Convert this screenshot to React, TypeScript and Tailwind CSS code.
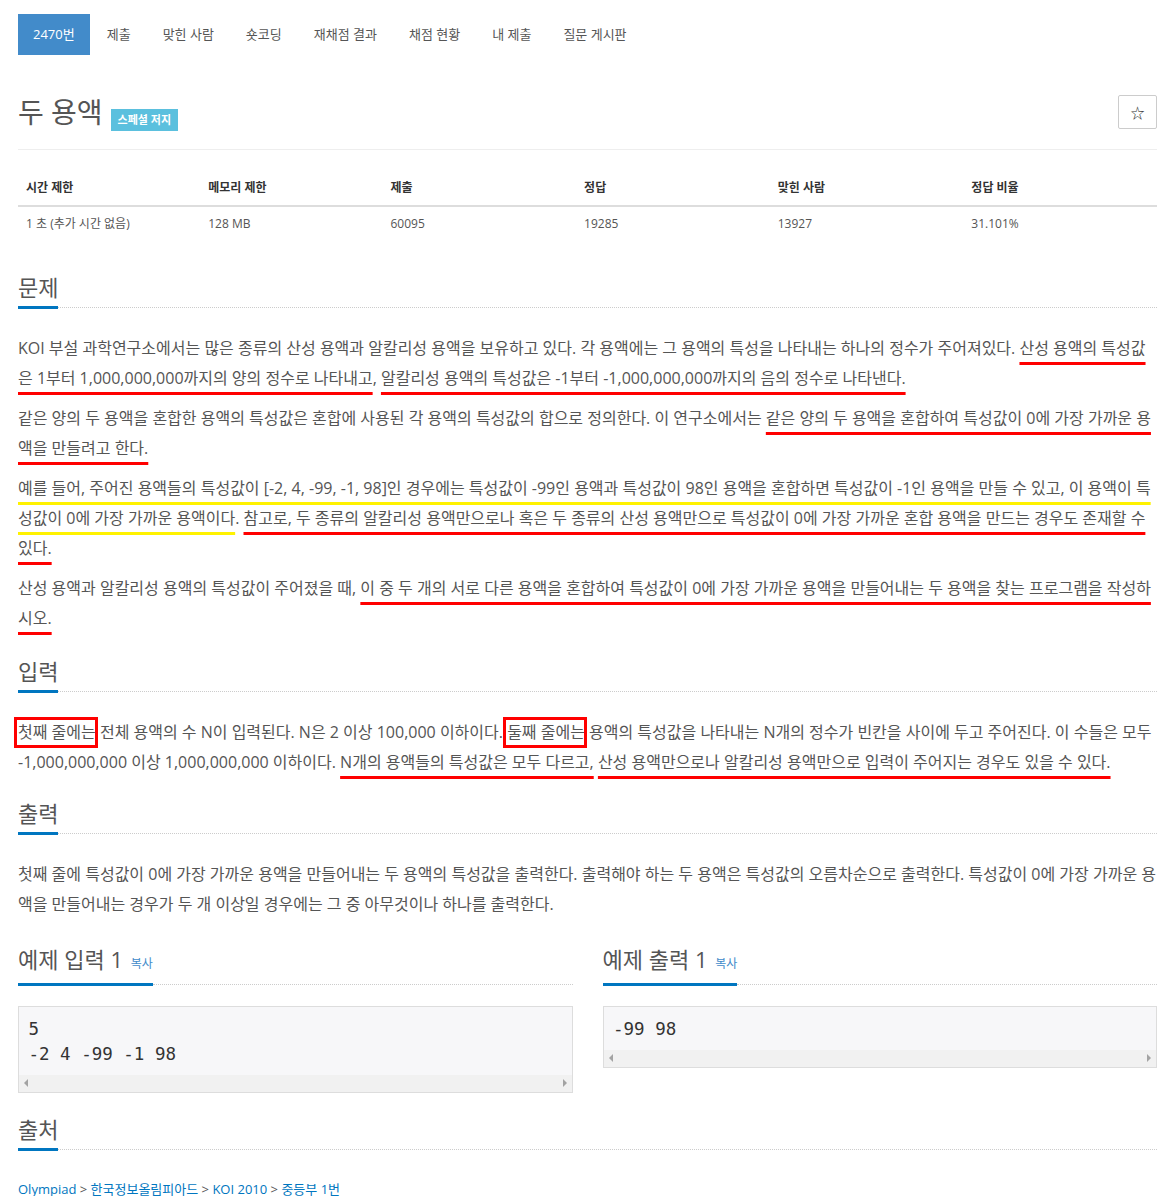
import React from 'react';

type Mark = 'r' | 'y' | 'box';
type Seg = { t: string; k?: Mark };

const tabs = ['제출', '맞힌 사람', '숏코딩', '재채점 결과', '채점 현황', '내 제출', '질문 게시판'];

const stats = [
  { h: '시간 제한', v: '1 초 (추가 시간 없음)', w: 'w-[16%]' },
  { h: '메모리 제한', v: '128 MB', w: 'w-[16%]' },
  { h: '제출', v: '60095', w: 'w-[17%]' },
  { h: '정답', v: '19285', w: 'w-[17%]' },
  { h: '맞힌 사람', v: '13927', w: 'w-[17%]' },
  { h: '정답 비율', v: '31.101%', w: 'w-[17%]' },
];

const problem: Seg[][][] = [
  [
    [
      { t: 'KOI 부설 과학연구소에서는 많은 종류의 산성 용액과 알칼리성 용액을 보유하고 있다. 각 용액에는 그 용액의 특성을 나타내는 하나의 정수가 주어져있다. ' },
      { t: '산성 용액의 특성값', k: 'r' },
    ],
    [
      { t: '은 1부터 1,000,000,000까지의 양의 정수로 나타내고', k: 'r' },
      { t: ', ' },
      { t: '알칼리성 용액의 특성값은 -1부터 -1,000,000,000까지의 음의 정수로 나타낸다.', k: 'r' },
    ],
  ],
  [
    [
      { t: '같은 양의 두 용액을 혼합한 용액의 특성값은 혼합에 사용된 각 용액의 특성값의 합으로 정의한다. 이 연구소에서는 ' },
      { t: '같은 양의 두 용액을 혼합하여 특성값이 0에 가장 가까운 용', k: 'r' },
    ],
    [{ t: '액을 만들려고 한다.', k: 'r' }],
  ],
  [
    [
      { t: '예를 들어, 주어진 용액들의 특성값이 [-2, 4, -99, -1, 98]인 경우에는 특성값이 -99인 용액과 특성값이 98인 용액을 혼합하면 특성값이 -1인 용액을 만들 수 있고, 이 용액이 특', k: 'y' },
    ],
    [
      { t: '성값이 0에 가장 가까운 용액이다', k: 'y' },
      { t: '. ' },
      { t: '참고로, 두 종류의 알칼리성 용액만으로나 혹은 두 종류의 산성 용액만으로 특성값이 0에 가장 가까운 혼합 용액을 만드는 경우도 존재할 수', k: 'r' },
    ],
    [{ t: '있다.', k: 'r' }],
  ],
  [
    [
      { t: '산성 용액과 알칼리성 용액의 특성값이 주어졌을 때, ' },
      { t: '이 중 두 개의 서로 다른 용액을 혼합하여 특성값이 0에 가장 가까운 용액을 만들어내는 두 용액을 찾는 프로그램을 작성하', k: 'r' },
    ],
    [{ t: '시오.', k: 'r' }],
  ],
];

const input: Seg[][][] = [
  [
    [
      { t: '첫째 줄에는', k: 'box' },
      { t: ' 전체 용액의 수 N이 입력된다. N은 2 이상 100,000 이하이다. ' },
      { t: '둘째 줄에는', k: 'box' },
      { t: ' 용액의 특성값을 나타내는 N개의 정수가 빈칸을 사이에 두고 주어진다. 이 수들은 모두' },
    ],
    [
      { t: '-1,000,000,000 이상 1,000,000,000 이하이다. ' },
      { t: 'N개의 용액들의 특성값은 모두 다르고,', k: 'r' },
      { t: ' ' },
      { t: '산성 용액만으로나 알칼리성 용액만으로 입력이 주어지는 경우도 있을 수 있다.', k: 'r' },
    ],
  ],
];

const output: Seg[][][] = [
  [
    [{ t: '첫째 줄에 특성값이 0에 가장 가까운 용액을 만들어내는 두 용액의 특성값을 출력한다. 출력해야 하는 두 용액은 특성값의 오름차순으로 출력한다. 특성값이 0에 가장 가까운 용' }],
    [{ t: '액을 만들어내는 경우가 두 개 이상일 경우에는 그 중 아무것이나 하나를 출력한다.' }],
  ],
];

const Piece = ({ s }: { s: Seg }) => {
  if (s.k === 'r')
    return (
      <span className="underline decoration-[#ff0000] decoration-[3px] underline-offset-[8px] [text-decoration-skip-ink:none]">
        {s.t}
      </span>
    );
  if (s.k === 'y')
    return (
      <span className="underline decoration-[#fff200] decoration-[3px] underline-offset-[8px] [text-decoration-skip-ink:none]">
        {s.t}
      </span>
    );
  if (s.k === 'box')
    return (
      <span className="relative">
        {s.t}
        <span className="absolute -bottom-[5px] -left-[4px] -right-[2px] -top-[4px] border-[3px] border-[#ff0000]" />
      </span>
    );
  return <>{s.t}</>;
};

const Paragraphs = ({ paras }: { paras: Seg[][][] }) => (
  <div className="mt-[24px] flex flex-col gap-[10px] text-[16px] leading-[30px] text-[#555]">
    {paras.map((p, i) => (
      <div key={i}>
        {p.map((line, j) => (
          <div key={j} className="whitespace-pre">
            {line.map((s, k) => (
              <Piece key={k} s={s} />
            ))}
          </div>
        ))}
      </div>
    ))}
  </div>
);

const Heading = ({ children, className = '' }: { children: React.ReactNode; className?: string }) => (
  <div className={`flex items-end ${className}`}>
    <div className="border-b-[3px] border-[#0076c0] pb-[7px] text-[22px] leading-[24px] text-[#555]">{children}</div>
    <div className="mb-[1px] flex-1 border-b border-dotted border-[#ccc]" />
  </div>
);

const Sample = ({ title, lines }: { title: string; lines: string[] }) => (
  <div>
    <Heading>
      {title} <span className="ml-[2px] text-[12px] text-[#428bca]">복사</span>
    </Heading>
    <div className="mt-[20px] border border-[#ddd] bg-[#f7f7f9]">
      <div className="px-[9.5px] pb-[8px] pt-[9.5px] font-['DejaVu_Sans_Mono',monospace] text-[17.5px] leading-[25px] text-[#333]">
        {lines.map((l, i) => (
          <div key={i} className="whitespace-pre">
            {l}
          </div>
        ))}
      </div>
      <div className="flex h-[17px] items-center justify-between bg-[#f1f1f1] px-[5px]">
        <span className="border-y-[4px] border-r-[4px] border-y-transparent border-r-[#a3a3a3]" />
        <span className="border-y-[4px] border-l-[4px] border-y-transparent border-l-[#a3a3a3]" />
      </div>
    </div>
  </div>
);

export default function App() {
  return (
    <div className="min-h-[1196px] bg-white pl-[18px] pr-[14px] pt-[14px] font-['Open_Sans','Noto_Sans_CJK_KR',sans-serif] text-[#555]">
      <nav className="flex gap-[2px] text-[13px]">
        <a className="flex h-[41px] items-center bg-[#428bca] px-[15px] text-white">2470번</a>
        {tabs.map((t) => (
          <a key={t} className="flex h-[41px] items-center px-[15px] text-[#555]">
            {t}
          </a>
        ))}
      </nav>

      <div className="mt-[40px] flex h-[34px] items-center justify-between">
        <div className="flex items-end">
          <h1 className="text-[28px] leading-[30px] text-[#555]">두 용액</h1>
          <span className="mb-[-4px] ml-[8px] bg-[#5bc0de] px-[7px] py-[3px] text-[11px] font-bold leading-[16px] text-white">
            스페셜 저지
          </span>
        </div>
        <button className="flex h-[34px] w-[39px] items-center justify-center rounded-[2px] border border-[#ccc] text-[14px] text-[#333]">
          ☆
        </button>
      </div>

      <div className="mt-[20px] border-t border-[#eee]" />

      <table className="mt-[19px] w-full text-left text-[12px]">
        <thead>
          <tr className="border-b-2 border-[#ddd]">
            {stats.map((s) => (
              <th key={s.h} className={`${s.w} px-[8px] pb-[7px] pt-[9px] font-bold leading-[20px] text-[#333]`}>
                {s.h}
              </th>
            ))}
          </tr>
        </thead>
        <tbody>
          <tr>
            {stats.map((s) => (
              <td key={s.h} className="px-[8px] py-[8px] leading-[17px]">
                {s.v}
              </td>
            ))}
          </tr>
        </tbody>
      </table>

      <Heading className="mt-[35px]">문제</Heading>
      <Paragraphs paras={problem} />

      <Heading className="mt-[26px]">입력</Heading>
      <Paragraphs paras={input} />

      <Heading className="mt-[24px]">출력</Heading>
      <Paragraphs paras={output} />

      <div className="mt-[28px] grid grid-cols-2 gap-[30px]">
        <Sample title="예제 입력 1" lines={['5', '-2 4 -99 -1 98']} />
        <Sample title="예제 출력 1" lines={['-99 98']} />
      </div>

      <Heading className="mt-[24px]">출처</Heading>
      <p className="mt-[28px] text-[13px] leading-[20px] text-[#555]">
        <a className="text-[#0076c0]">Olympiad</a> &gt; <a className="text-[#0076c0]">한국정보올림피아드</a> &gt;{' '}
        <a className="text-[#0076c0]">KOI 2010</a> &gt; <a className="text-[#0076c0]">중등부 1번</a>
      </p>
    </div>
  );
}
